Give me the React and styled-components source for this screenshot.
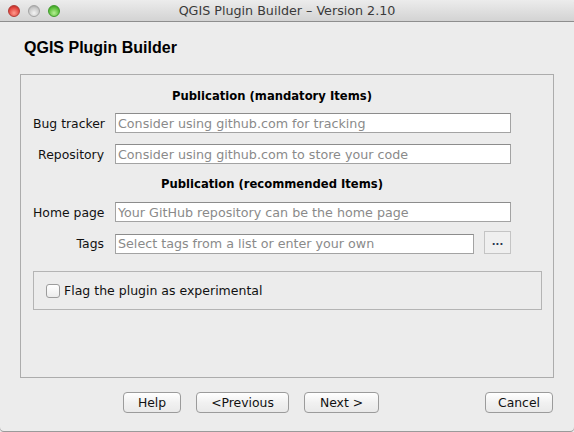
import React from "react";
import styled, { createGlobalStyle } from "styled-components";

const Global = createGlobalStyle`
  html, body {
    margin: 0;
    padding: 0;
    background: #ececec;
  }
  * {
    box-sizing: border-box;
  }
`;

const Window = styled.div`
  width: 574px;
  height: 432px;
  background: #ececec;
  font-family: "DejaVu Sans", "Liberation Sans", sans-serif;
  font-size: 12.4px;
  color: #111;
  display: flex;
  flex-direction: column;
  overflow: hidden;
  border-radius: 5px 5px 4px 4px;
  box-shadow: inset 0 -1px 0 #9a9a9a;
`;

const TitleBar = styled.div`
  height: 22px;
  flex: none;
  position: relative;
  display: flex;
  align-items: center;
  justify-content: center;
  background: linear-gradient(#ececec, #d3d3d3);
  border-bottom: 1px solid #8e8e8e;
  color: #3a3a3a;
  font-size: 12.7px;
`;

const Lights = styled.div`
  position: absolute;
  left: 8px;
  top: 5px;
  display: flex;
  gap: 8px;
`;

const Light = styled.span`
  width: 12px;
  height: 12px;
  border-radius: 50%;
  border: 1px solid ${(p) => p.$edge};
  background: radial-gradient(circle at 50% 70%, ${(p) => p.$light} 0%, ${(p) => p.$color} 60%, ${(p) => p.$dark} 100%);
`;

const Content = styled.div`
  flex: 1;
  display: flex;
  flex-direction: column;
  padding: 17px 20px 0 20px;
`;

const Heading = styled.h1`
  margin: 0 0 0 4px;
  font-family: "Liberation Sans", Arial, sans-serif;
  font-weight: bold;
  font-size: 16px;
  line-height: 18px;
  color: #000;
`;

const Frame = styled.div`
  margin-top: 17px;
  width: 534px;
  height: 304px;
  border: 1px solid #acacac;
  padding: 13px 0 0 12px;
  display: flex;
  flex-direction: column;
`;

const SectionTitle = styled.div`
  font-weight: bold;
  font-size: 11.6px;
  line-height: 16px;
  text-align: center;
  width: 478px;
  margin-bottom: ${(p) => p.$after}px;
  color: #000;
`;

const Row = styled.div`
  display: grid;
  grid-template-columns: 71px 396px;
  column-gap: 11px;
  align-items: center;
  height: 20px;
  margin-bottom: ${(p) => p.$after}px;
`;

const Label = styled.label`
  text-align: right;
  white-space: nowrap;
  color: #111;
`;

const Field = styled.div`
  display: flex;
  align-items: center;
  gap: 10px;
`;

const Input = styled.input`
  width: ${(p) => p.$width || 396}px;
  height: 20px;
  border: 1px solid #a3a3a3;
  border-top-color: #8c8c8c;
  background: #fff;
  padding: 0 2px;
  font-family: "DejaVu Sans", sans-serif;
  font-size: 12.7px;
  outline: none;
  &::placeholder {
    color: #8a8a8a;
  }
`;

const DotsButton = styled.button`
  width: 27px;
  height: 23px;
  margin-top: -2px;
  border: 1px solid #c4c4c4;
  background: #efefef;
  padding: 0 0 2px 0;
  display: flex;
  align-items: center;
  justify-content: center;
  font-family: "DejaVu Sans", sans-serif;
  font-weight: bold;
  font-size: 10px;
  color: #2a3550;
`;

const GroupBox = styled.div`
  width: 509px;
  height: 39px;
  border: 1px solid #b4b4b4;
  display: flex;
  align-items: center;
  padding-left: 12px;
  gap: 4px;
  font-size: 12.5px;
`;

const Check = styled.span`
  width: 14px;
  height: 14px;
  border: 1px solid #9c9c9c;
  border-radius: 3px;
  background: linear-gradient(#ffffff, #ececec);
`;

const Footer = styled.div`
  display: flex;
  align-items: center;
  height: 21px;
  margin-top: 14px;
  width: 534px;
`;

const Button = styled.button`
  width: ${(p) => p.$width}px;
  margin-left: ${(p) => p.$left}px;
  height: 21px;
  border: 1px solid #9b9b9b;
  border-radius: 4px;
  background: linear-gradient(#ffffff, #f1f1f1 50%, #e9e9e9);
  font-family: "DejaVu Sans", sans-serif;
  font-size: 12.4px;
  color: #111;
  padding: 0;
`;

const fields = {
  mandatory: [
    { label: "Bug tracker", hint: "Consider using github.com for tracking" },
    { label: "Repository", hint: "Consider using github.com to store your code" },
  ],
};

export default function App() {
  return (
    <>
      <Global />
      <Window>
        <TitleBar>
          <Lights>
            <Light $color="#e2463f" $light="#ff9a8c" $dark="#a8201b" $edge="#b03a34" />
            <Light $color="#c9c9c9" $light="#f4f4f4" $dark="#9a9a9a" $edge="#a3a3a3" />
            <Light $color="#5cbf3b" $light="#b6ef94" $dark="#2f8a1c" $edge="#3e9a2a" />
          </Lights>
          QGIS Plugin Builder – Version 2.10
        </TitleBar>
        <Content>
          <Heading>QGIS Plugin Builder</Heading>
          <Frame>
            <SectionTitle $after={9}>Publication (mandatory Items)</SectionTitle>
            {fields.mandatory.map((f, i) => (
              <Row key={f.label} $after={i === 0 ? 11 : 12}>
                <Label>{f.label}</Label>
                <Input placeholder={f.hint} />
              </Row>
            ))}
            <SectionTitle $after={10}>Publication (recommended Items)</SectionTitle>
            <Row $after={11}>
              <Label>Home page</Label>
              <Input placeholder="Your GitHub repository can be the home page" />
            </Row>
            <Row $after={18}>
              <Label>Tags</Label>
              <Field>
                <Input $width={359} placeholder="Select tags from a list or enter your own" />
                <DotsButton>...</DotsButton>
              </Field>
            </Row>
            <GroupBox>
              <Check />
              <span>Flag the plugin as experimental</span>
            </GroupBox>
          </Frame>
          <Footer>
            <Button $width={58} $left={103}>Help</Button>
            <Button $width={93} $left={15}>&lt;Previous</Button>
            <Button $width={75} $left={15}>Next &gt;</Button>
            <Button $width={68} $left={106}>Cancel</Button>
          </Footer>
        </Content>
      </Window>
    </>
  );
}
